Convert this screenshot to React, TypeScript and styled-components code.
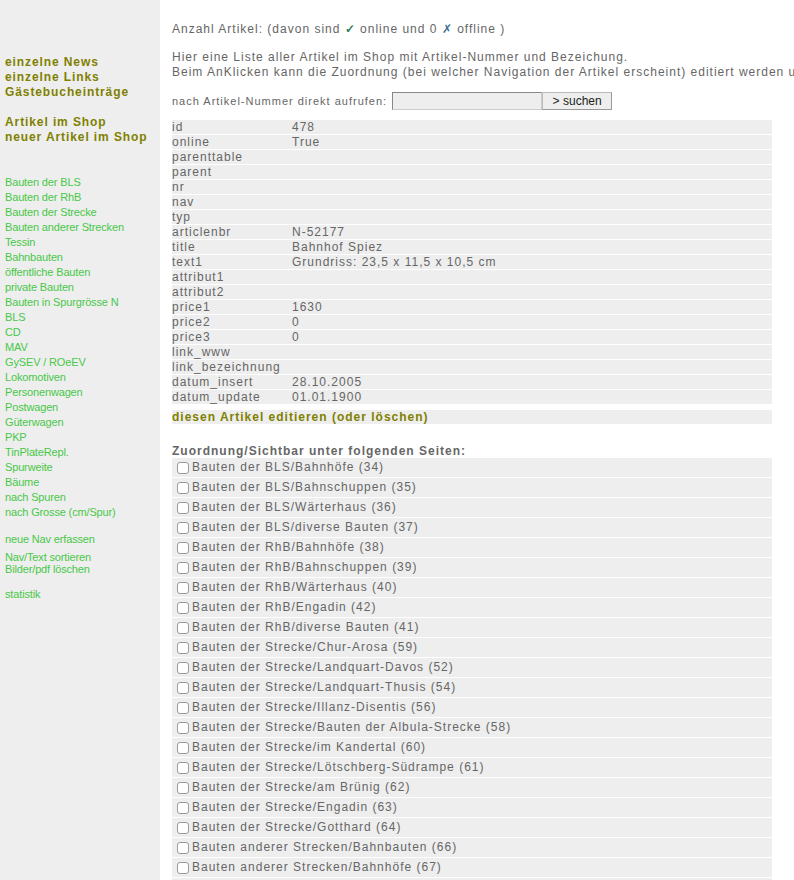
import React from 'react';
import styled, { createGlobalStyle } from 'styled-components';

const GlobalStyle = createGlobalStyle`
  html, body {
    margin: 0;
    padding: 0;
    overflow-x: hidden;
    background: #fff;
    font-family: "Liberation Sans", Arial, sans-serif;
  }
`;

const Page = styled.div`
  display: flex;
  min-height: 880px;
  width: 794px;
  overflow: hidden;
`;

const Sidebar = styled.nav`
  flex: 0 0 160px;
  background: #eeeeee;
  padding: 55px 0 0 5px;
  box-sizing: border-box;
`;

const NavGroup = styled.div<{ $gap?: number; $lh?: number }>`
  margin-top: ${p => p.$gap ?? 0}px;
  line-height: ${p => p.$lh ?? 15}px;
`;

const BoldLink = styled.a`
  display: block;
  color: #808000;
  font-size: 12px;
  font-weight: bold;
  letter-spacing: 0.9px;
  text-decoration: none;
  white-space: nowrap;
`;

const LightLink = styled.a`
  display: block;
  color: #48c848;
  font-size: 11px;
  letter-spacing: -0.15px;
  text-decoration: none;
  white-space: nowrap;
`;

const Main = styled.main`
  flex: 1;
  min-width: 0;
  padding: 22px 0 0 12px;
  color: #666;
  font-size: 12px;
  letter-spacing: 1px;
  line-height: 15px;
  white-space: nowrap;
  overflow: hidden;
`;

const Para = styled.p<{ $gap?: number }>`
  margin: ${p => p.$gap ?? 0}px 0 0;
`;

const Check = styled.span`
  color: #2e7d5b;
  font-weight: bold;
`;

const Cross = styled.span`
  color: #3b6e8f;
`;

const SearchRow = styled.form`
  display: flex;
  align-items: center;
  height: 18px;
  margin-top: 12px;
  font-size: 11px;
  letter-spacing: 1px;
`;

const SearchInput = styled.input`
  width: 150px;
  height: 18px;
  box-sizing: border-box;
  margin-left: 5px;
  background: #eee;
  border: 1px solid #ccc;
  border-top-color: #888;
  border-left-color: #888;
  padding: 0 3px;
`;

const SearchButton = styled.button`
  width: 70px;
  height: 18px;
  box-sizing: border-box;
  background: #eee;
  border: 1px solid #bbb;
  border-right-color: #999;
  border-bottom-color: #999;
  font-family: "Liberation Sans", Arial, sans-serif;
  font-size: 12px;
  color: #222;
  padding: 0;
`;

const DataTable = styled.div`
  width: 600px;
  margin-top: 10px;
  display: flex;
  flex-direction: column;
  gap: 1px;
`;

const DataRow = styled.div`
  display: grid;
  grid-template-columns: 120px 1fr;
  height: 14px;
  line-height: 14px;
  background: #eeeeee;
`;

const EditRow = styled.div`
  width: 600px;
  height: 14px;
  line-height: 14px;
  margin-top: 6px;
  background: #eeeeee;
  color: #808000;
  font-weight: bold;
`;

const Heading = styled.h3`
  margin: 21px 0 0;
  font-size: 12px;
  line-height: 13px;
  font-weight: bold;
  color: #666;
`;

const CheckList = styled.div`
  width: 600px;
  display: flex;
  flex-direction: column;
  gap: 1px;
`;

const CheckRow = styled.label`
  display: flex;
  align-items: center;
  height: 19px;
  background: #eeeeee;
  font-size: 12px;
`;

const Box = styled.input`
  appearance: none;
  width: 12px;
  height: 12px;
  margin: 0 3px 0 5px;
  border: 1px solid #9a9a9a;
  border-radius: 3px;
  background: #fff;
  box-sizing: border-box;
`;

const topNav = [['einzelne News', 'einzelne Links', 'Gästebucheinträge'], ['Artikel im Shop', 'neuer Artikel im Shop']];

const catNav = [
  'Bauten der BLS', 'Bauten der RhB', 'Bauten der Strecke', 'Bauten anderer Strecken', 'Tessin',
  'Bahnbauten', 'öffentliche Bauten', 'private Bauten', 'Bauten in Spurgrösse N', 'BLS', 'CD', 'MAV',
  'GySEV / ROeEV', 'Lokomotiven', 'Personenwagen', 'Postwagen', 'Güterwagen', 'PKP', 'TinPlateRepl.',
  'Spurweite', 'Bäume', 'nach Spuren', 'nach Grosse (cm/Spur)',
];

const fields: [string, string][] = [
  ['id', '478'], ['online', 'True'], ['parenttable', ''], ['parent', ''], ['nr', ''], ['nav', ''],
  ['typ', ''], ['articlenbr', 'N-52177'], ['title', 'Bahnhof Spiez'],
  ['text1', 'Grundriss: 23,5 x 11,5 x 10,5 cm'], ['attribut1', ''], ['attribut2', ''],
  ['price1', '1630'], ['price2', '0'], ['price3', '0'], ['link_www', ''], ['link_bezeichnung', ''],
  ['datum_insert', '28.10.2005'], ['datum_update', '01.01.1900'],
];

const pages = [
  'Bauten der BLS/Bahnhöfe (34)', 'Bauten der BLS/Bahnschuppen (35)', 'Bauten der BLS/Wärterhaus (36)',
  'Bauten der BLS/diverse Bauten (37)', 'Bauten der RhB/Bahnhöfe (38)', 'Bauten der RhB/Bahnschuppen (39)',
  'Bauten der RhB/Wärterhaus (40)', 'Bauten der RhB/Engadin (42)', 'Bauten der RhB/diverse Bauten (41)',
  'Bauten der Strecke/Chur-Arosa (59)', 'Bauten der Strecke/Landquart-Davos (52)',
  'Bauten der Strecke/Landquart-Thusis (54)', 'Bauten der Strecke/Illanz-Disentis (56)',
  'Bauten der Strecke/Bauten der Albula-Strecke (58)', 'Bauten der Strecke/im Kandertal (60)',
  'Bauten der Strecke/Lötschberg-Südrampe (61)', 'Bauten der Strecke/am Brünig (62)',
  'Bauten der Strecke/Engadin (63)', 'Bauten der Strecke/Gotthard (64)',
  'Bauten anderer Strecken/Bahnbauten (66)', 'Bauten anderer Strecken/Bahnhöfe (67)',
  'Bauten anderer Strecken/Wärterhäuser (68)',
];

export default function App() {
  return (
    <Page>
      <GlobalStyle />
      <Sidebar>
        {topNav.map((group, i) => (
          <NavGroup key={i} $gap={i ? 15 : 0}>
            {group.map(l => <BoldLink key={l} href="#">{l}</BoldLink>)}
          </NavGroup>
        ))}
        <NavGroup $gap={30}>
          {catNav.map(l => <LightLink key={l} href="#">{l}</LightLink>)}
        </NavGroup>
        <NavGroup $gap={12}>
          <LightLink href="#">neue Nav erfassen</LightLink>
        </NavGroup>
        <NavGroup $gap={4} $lh={12}>
          <LightLink href="#">Nav/Text sortieren</LightLink>
          <LightLink href="#">Bilder/pdf löschen</LightLink>
        </NavGroup>
        <NavGroup $gap={12}>
          <LightLink href="#">statistik</LightLink>
        </NavGroup>
      </Sidebar>

      <Main>
        <Para>
          Anzahl Artikel: (davon sind <Check>✓</Check> online und 0 <Cross>✗</Cross> offline )
        </Para>
        <Para $gap={13}>
          Hier eine Liste aller Artikel im Shop mit Artikel-Nummer und Bezeichung.<br />
          Beim AnKlicken kann die Zuordnung (bei welcher Navigation der Artikel erscheint) editiert werden und gespeichert.
        </Para>
        <SearchRow onSubmit={e => e.preventDefault()}>
          nach Artikel-Nummer direkt aufrufen:
          <SearchInput type="text" />
          <SearchButton type="submit">&gt; suchen</SearchButton>
        </SearchRow>

        <DataTable>
          {fields.map(([k, v]) => (
            <DataRow key={k}>
              <span>{k}</span>
              <span>{v}</span>
            </DataRow>
          ))}
        </DataTable>
        <EditRow>diesen Artikel editieren (oder löschen)</EditRow>

        <Heading>Zuordnung/Sichtbar unter folgenden Seiten:</Heading>
        <CheckList>
          {pages.map(p => (
            <CheckRow key={p}>
              <Box type="checkbox" />
              {p}
            </CheckRow>
          ))}
        </CheckList>
      </Main>
    </Page>
  );
}
